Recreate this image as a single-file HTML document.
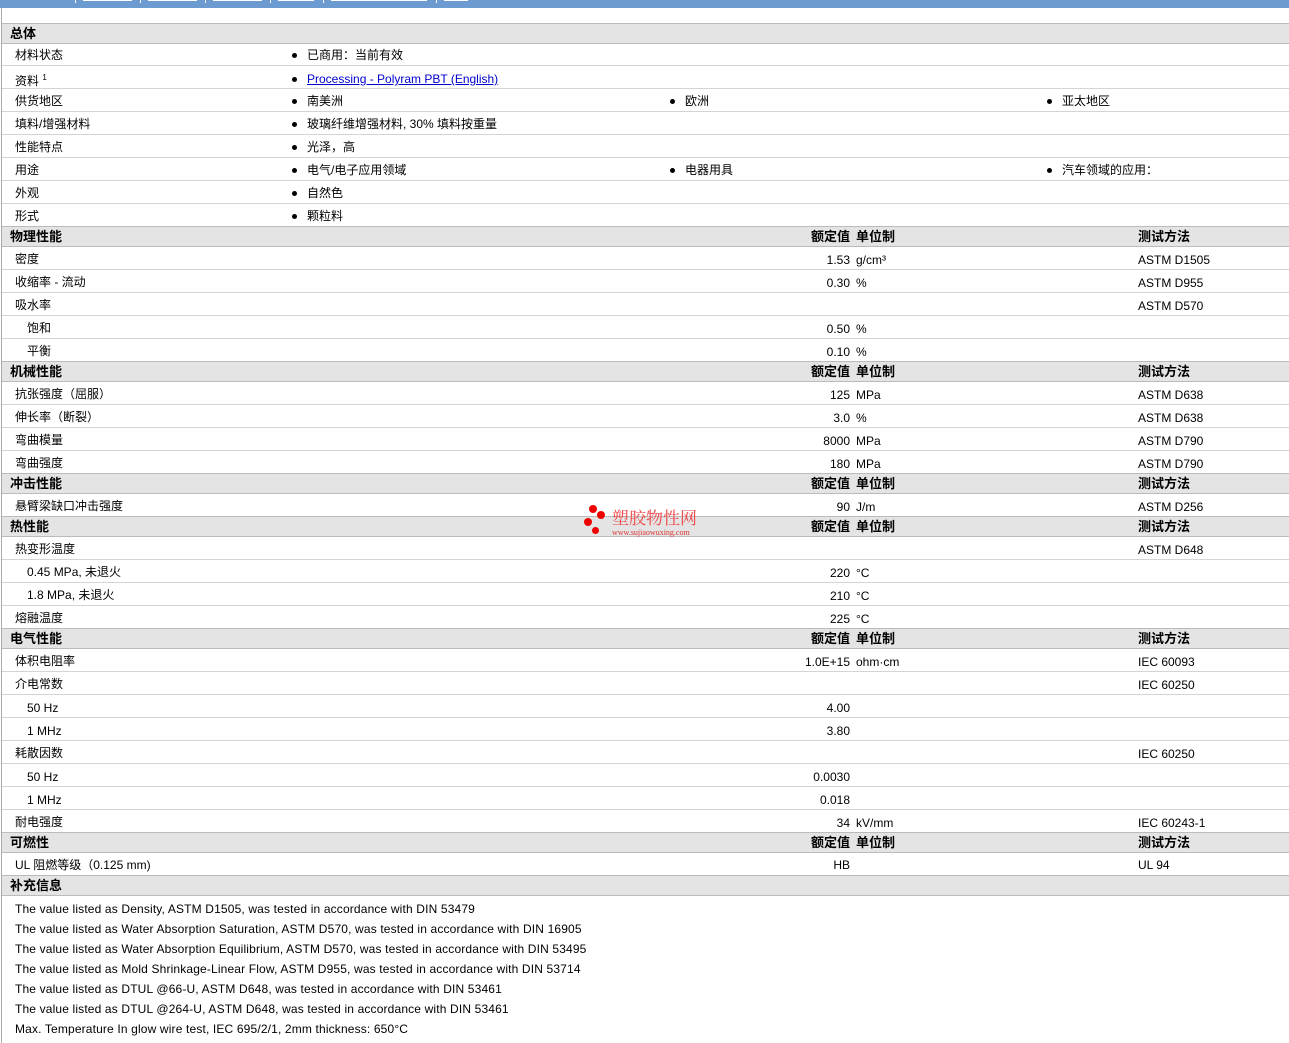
<!DOCTYPE html>
<html><head><meta charset="utf-8"><style>
body{margin:0;width:1289px;height:1043px;position:relative;overflow:hidden;background:#fff;font-family:"Liberation Sans","Noto Sans CJK SC",sans-serif;font-size:12px;color:#000}
.top{position:absolute;left:0;top:0;width:1289px;height:8px;background:#6b9bd1}
.tab{position:absolute;top:0;height:1px;background:#fff}
.tl{position:absolute;top:0;width:1px;height:3px;background:#fff}
.lb{position:absolute;left:1px;top:8px;width:1px;height:1035px;background:#aaa}
.r,.h{position:absolute;left:2px;width:1287px;box-sizing:border-box}
.r{height:23px;border-bottom:1px solid #d4d4d4}
.h{height:21px;background:#e4e4e4;border-top:1px solid #bbb;border-bottom:1px solid #bbb;font-weight:bold;font-size:13px}
.r span,.h span{position:absolute;top:5px;white-space:nowrap;line-height:14px}
.h span{top:3px}
.l{left:13px}.s{left:25px}
.v{right:439px;text-align:right}
.u{left:854px}
.m{left:1136px}
.b{padding-left:15px}
.b:before{content:"";position:absolute;left:0;top:5px;width:5px;height:5px;border-radius:50%;background:#000}
a{color:#00c;text-decoration:underline}
.note{position:absolute;left:15px;white-space:nowrap;font-size:12px;letter-spacing:0.15px}
</style></head><body>
<div class="top"></div>
<div class="tl" style="left:75px"></div><div class="tab" style="left:83px;width:49px"></div>
<div class="tl" style="left:140px"></div><div class="tab" style="left:148px;width:49px"></div>
<div class="tl" style="left:205px"></div><div class="tab" style="left:213px;width:49px"></div>
<div class="tl" style="left:270px"></div><div class="tab" style="left:278px;width:36px"></div>
<div class="tl" style="left:323px"></div><div class="tab" style="left:331px;width:96px"></div>
<div class="tl" style="left:436px"></div><div class="tab" style="left:444px;width:24px"></div>
<div class="lb"></div>
<div class="h" style="top:23px"><span style="left:8px">总体</span></div>
<div class="r" style="top:43px"><span class="l">材料状态</span><span class="b" style="left:290px">已商用：当前有效</span></div>
<div class="r" style="top:66px"><span class="l" style="top:5px">资料 <sup style="font-size:8px">1</sup></span><span class="b" style="left:290px;top:6px"><a>Processing - Polyram PBT (English)</a></span></div>
<div class="r" style="top:89px"><span class="l">供货地区</span><span class="b" style="left:290px">南美洲</span><span class="b" style="left:668px">欧洲</span><span class="b" style="left:1045px">亚太地区</span></div>
<div class="r" style="top:112px"><span class="l">填料/增强材料</span><span class="b" style="left:290px">玻璃纤维增强材料, 30% 填料按重量</span></div>
<div class="r" style="top:135px"><span class="l">性能特点</span><span class="b" style="left:290px">光泽，高</span></div>
<div class="r" style="top:158px"><span class="l">用途</span><span class="b" style="left:290px">电气/电子应用领域</span><span class="b" style="left:668px">电器用具</span><span class="b" style="left:1045px">汽车领域的应用：</span></div>
<div class="r" style="top:181px"><span class="l">外观</span><span class="b" style="left:290px">自然色</span></div>
<div class="r" style="top:204px;border-bottom:none"><span class="l">形式</span><span class="b" style="left:290px">颗粒料</span></div>

<div class="h" style="top:226px"><span style="left:8px">物理性能</span><span class="v">额定值</span><span class="u">单位制</span><span class="m">测试方法</span></div>
<div class="r" style="top:247px"><span class="l">密度</span><span class="v" style="top:6px">1.53</span><span class="u" style="top:6px">g/cm³</span><span class="m" style="top:6px">ASTM D1505</span></div>
<div class="r" style="top:270px"><span class="l">收缩率 - 流动</span><span class="v" style="top:6px">0.30</span><span class="u" style="top:6px">%</span><span class="m" style="top:6px">ASTM D955</span></div>
<div class="r" style="top:293px"><span class="l">吸水率</span><span class="m" style="top:6px">ASTM D570</span></div>
<div class="r" style="top:316px"><span class="s">饱和</span><span class="v" style="top:6px">0.50</span><span class="u" style="top:6px">%</span></div>
<div class="r" style="top:339px;border-bottom:none"><span class="s">平衡</span><span class="v" style="top:6px">0.10</span><span class="u" style="top:6px">%</span></div>

<div class="h" style="top:361px"><span style="left:8px">机械性能</span><span class="v">额定值</span><span class="u">单位制</span><span class="m">测试方法</span></div>
<div class="r" style="top:382px"><span class="l">抗张强度（屈服）</span><span class="v" style="top:6px">125</span><span class="u" style="top:6px">MPa</span><span class="m" style="top:6px">ASTM D638</span></div>
<div class="r" style="top:405px"><span class="l">伸长率（断裂）</span><span class="v" style="top:6px">3.0</span><span class="u" style="top:6px">%</span><span class="m" style="top:6px">ASTM D638</span></div>
<div class="r" style="top:428px"><span class="l">弯曲模量</span><span class="v" style="top:6px">8000</span><span class="u" style="top:6px">MPa</span><span class="m" style="top:6px">ASTM D790</span></div>
<div class="r" style="top:451px;border-bottom:none"><span class="l">弯曲强度</span><span class="v" style="top:6px">180</span><span class="u" style="top:6px">MPa</span><span class="m" style="top:6px">ASTM D790</span></div>

<div class="h" style="top:473px"><span style="left:8px">冲击性能</span><span class="v">额定值</span><span class="u">单位制</span><span class="m">测试方法</span></div>
<div class="r" style="top:494px;border-bottom:none"><span class="l">悬臂梁缺口冲击强度</span><span class="v" style="top:6px">90</span><span class="u" style="top:6px">J/m</span><span class="m" style="top:6px">ASTM D256</span></div>

<div class="h" style="top:516px"><span style="left:8px">热性能</span><span class="v">额定值</span><span class="u">单位制</span><span class="m">测试方法</span></div>
<div class="r" style="top:537px"><span class="l">热变形温度</span><span class="m" style="top:6px">ASTM D648</span></div>
<div class="r" style="top:560px"><span class="s">0.45 MPa, 未退火</span><span class="v" style="top:6px">220</span><span class="u" style="top:6px">°C</span></div>
<div class="r" style="top:583px"><span class="s">1.8 MPa, 未退火</span><span class="v" style="top:6px">210</span><span class="u" style="top:6px">°C</span></div>
<div class="r" style="top:606px;border-bottom:none"><span class="l">熔融温度</span><span class="v" style="top:6px">225</span><span class="u" style="top:6px">°C</span></div>

<div class="h" style="top:628px"><span style="left:8px">电气性能</span><span class="v">额定值</span><span class="u">单位制</span><span class="m">测试方法</span></div>
<div class="r" style="top:649px"><span class="l">体积电阻率</span><span class="v" style="top:6px">1.0E+15</span><span class="u" style="top:6px">ohm·cm</span><span class="m" style="top:6px">IEC 60093</span></div>
<div class="r" style="top:672px"><span class="l">介电常数</span><span class="m" style="top:6px">IEC 60250</span></div>
<div class="r" style="top:695px"><span class="s" style="top:6px">50 Hz</span><span class="v" style="top:6px">4.00</span></div>
<div class="r" style="top:718px"><span class="s" style="top:6px">1 MHz</span><span class="v" style="top:6px">3.80</span></div>
<div class="r" style="top:741px"><span class="l">耗散因数</span><span class="m" style="top:6px">IEC 60250</span></div>
<div class="r" style="top:764px"><span class="s" style="top:6px">50 Hz</span><span class="v" style="top:6px">0.0030</span></div>
<div class="r" style="top:787px"><span class="s" style="top:6px">1 MHz</span><span class="v" style="top:6px">0.018</span></div>
<div class="r" style="top:810px;border-bottom:none"><span class="l">耐电强度</span><span class="v" style="top:6px">34</span><span class="u" style="top:6px">kV/mm</span><span class="m" style="top:6px">IEC 60243-1</span></div>

<div class="h" style="top:832px"><span style="left:8px">可燃性</span><span class="v">额定值</span><span class="u">单位制</span><span class="m">测试方法</span></div>
<div class="r" style="top:853px;border-bottom:none"><span class="l">UL 阻燃等级（0.125 mm)</span><span class="v" style="top:5px">HB</span><span class="m" style="top:5px">UL 94</span></div>

<div class="h" style="top:875px"><span style="left:8px">补充信息</span></div>
<div class="note" style="top:902px">The value listed as Density, ASTM D1505, was tested in accordance with DIN 53479</div>
<div class="note" style="top:922px">The value listed as Water Absorption Saturation, ASTM D570, was tested in accordance with DIN 16905</div>
<div class="note" style="top:942px">The value listed as Water Absorption Equilibrium, ASTM D570, was tested in accordance with DIN 53495</div>
<div class="note" style="top:962px">The value listed as Mold Shrinkage-Linear Flow, ASTM D955, was tested in accordance with DIN 53714</div>
<div class="note" style="top:982px">The value listed as DTUL @66-U, ASTM D648, was tested in accordance with DIN 53461</div>
<div class="note" style="top:1002px">The value listed as DTUL @264-U, ASTM D648, was tested in accordance with DIN 53461</div>
<div class="note" style="top:1022px">Max. Temperature In glow wire test, IEC 695/2/1, 2mm thickness: 650°C</div>

<div style="position:absolute;left:582px;top:503px;width:130px;height:36px">
<div style="position:absolute;left:7px;top:2px;width:8px;height:8px;border-radius:50%;background:#e00"></div>
<div style="position:absolute;left:15px;top:8px;width:8px;height:8px;border-radius:50%;background:#e00"></div>
<div style="position:absolute;left:2px;top:15px;width:8px;height:8px;border-radius:50%;background:#e00"></div>
<div style="position:absolute;left:10px;top:24px;width:7px;height:7px;border-radius:50%;background:#e00"></div>
<div style="position:absolute;left:30px;top:5px;font-size:17px;color:#e44;font-family:'Noto Serif CJK SC',serif;line-height:18px">塑胶物性网</div>
<div style="position:absolute;left:30px;top:25px;font-size:8px;color:#d33;font-family:'Liberation Serif',serif">www.sujiaowuxing.com</div>
</div>
</body></html>
